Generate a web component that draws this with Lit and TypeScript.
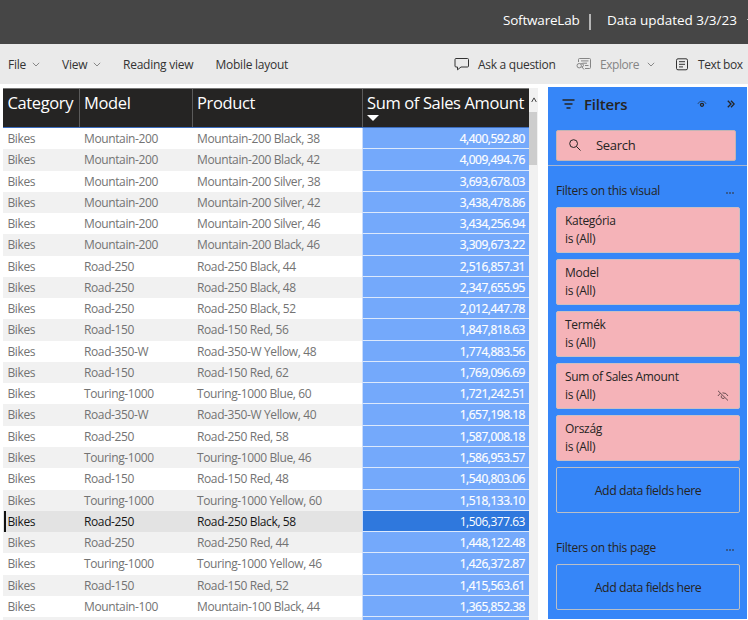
import { LitElement, html, css, svg } from "lit";
import { customElement, property } from "lit/decorators.js";
import { classMap } from "lit/directives/class-map.js";

type Row = [model: string, product: string, amount: string];

const rows: Row[] = [
  ["Mountain-200", "Mountain-200 Black, 38", "4,400,592.80"],
  ["Mountain-200", "Mountain-200 Black, 42", "4,009,494.76"],
  ["Mountain-200", "Mountain-200 Silver, 38", "3,693,678.03"],
  ["Mountain-200", "Mountain-200 Silver, 42", "3,438,478.86"],
  ["Mountain-200", "Mountain-200 Silver, 46", "3,434,256.94"],
  ["Mountain-200", "Mountain-200 Black, 46", "3,309,673.22"],
  ["Road-250", "Road-250 Black, 44", "2,516,857.31"],
  ["Road-250", "Road-250 Black, 48", "2,347,655.95"],
  ["Road-250", "Road-250 Black, 52", "2,012,447.78"],
  ["Road-150", "Road-150 Red, 56", "1,847,818.63"],
  ["Road-350-W", "Road-350-W Yellow, 48", "1,774,883.56"],
  ["Road-150", "Road-150 Red, 62", "1,769,096.69"],
  ["Touring-1000", "Touring-1000 Blue, 60", "1,721,242.51"],
  ["Road-350-W", "Road-350-W Yellow, 40", "1,657,198.18"],
  ["Road-250", "Road-250 Red, 58", "1,587,008.18"],
  ["Touring-1000", "Touring-1000 Blue, 46", "1,586,953.57"],
  ["Road-150", "Road-150 Red, 48", "1,540,803.06"],
  ["Touring-1000", "Touring-1000 Yellow, 60", "1,518,133.10"],
  ["Road-250", "Road-250 Black, 58", "1,506,377.63"],
  ["Road-250", "Road-250 Red, 44", "1,448,122.48"],
  ["Touring-1000", "Touring-1000 Yellow, 46", "1,426,372.87"],
  ["Road-150", "Road-150 Red, 52", "1,415,563.61"],
  ["Mountain-100", "Mountain-100 Black, 44", "1,365,852.38"],
  ["", "", ""],
];
const selectedIndex = 18;

const glyphs: Record<string, { w: number; h: number; body: unknown }> = {
  chevron: { w: 8, h: 5, body: svg`<path d="M.8.8 4 4 7.2.8" />` },
  comment: { w: 16, h: 14, body: svg`<path d="M2 1.500h11.500q1 0 1 1v6.500q0 1-1 1H7L3.500 12.800V10H2q-1 0-1-1v-6.500q0-1 1-1Z" />` },
  explore: { w: 16, h: 14, body: svg`<path d="M2.500 5V2.500q0-1 1-1h10q1 0 1 1v8q0 1-1 1H9M5 3.900h7.500M6.500 6.200H11M9 8.500h3.500" /><circle cx="3.200" cy="8.700" r="2.200" /><path d="M4.500 6.700q3-.7 3 1.600 0 1.700-2 1.700M6 10l2 2.500" />` },
  textbox: { w: 14, h: 13, body: svg`<rect x="1.500" y=".8" width="11" height="11" rx="1.500" /><path d="M4 3.700h6M4 6.300h6M4 8.900h4" />` },
  funnel: { w: 13, h: 10, body: svg`<path d="M.5 1h12M2.500 5h8M4.500 9h4" stroke-width="1.300" />` },
  eye: { w: 10, h: 8, body: svg`<path d="M.8 4Q2 1.200 5 1.200T9.200 4" opacity=".6"/><circle cx="5" cy="4.800" r="1.500" stroke-width="1.300"/>` },
  collapse: { w: 8, h: 8, body: svg`<path d="M.8.700 4 4 .8 7.300M4 .700 7.200 4 4 7.300" stroke-width="1.300" />` },
  search: { w: 12, h: 12, body: svg`<circle cx="4.600" cy="4.600" r="3.900" /><path d="m7.500 7.500 4 4" />` },
  hidden: { w: 12, h: 11, body: svg`<path d="M1 .8l10 9.700M1 6q.8-1.800 2.500-2.500M5.500 2.800Q9.500 2.600 11 6" /><path d="M4.300 5.500q-.8 2.700 1.700 3 1.200 0 1.700-.8" />` },
  sort: { w: 12, h: 6, body: svg`<path d="M0 0h12L6 6Z" fill="currentColor" stroke="none" />` },
  up: { w: 6, h: 6, body: svg`<path d="M.7 5 3 .9 5.300 5" />` },
  more: { w: 8, h: 2, body: svg`<path d="M0 1h2M3 1h2M6 1h2" stroke-width="1.500" />` },
};

@customElement("ui-glyph")
class UiGlyph extends LitElement {
  @property() name = "chevron";
  static styles = css`
    :host { display: inline-flex; flex: none; }
    svg { display: block; fill: none; stroke: currentColor; stroke-width: 1; }
  `;
  render() {
    const g = glyphs[this.name];
    return html`<svg width=${g.w} height=${g.h} viewBox="0 0 ${g.w} ${g.h}">${g.body}</svg>`;
  }
}

@customElement("sales-table")
class SalesTable extends LitElement {
  static styles = css`
    :host { display: flex; height: 532px; width: 535px; overflow: hidden; }
    .table { width: 526px; flex: none; }
    .line { display: grid; grid-template-columns: 76.500px 113px 170px 166.500px; }
    .head { height: 40px; box-sizing: border-box; background: #252423; color: #fff; border-top: 1px solid #777; border-bottom: 1px solid #3c6dbe; font-size: 16.500px; letter-spacing: -.37px; }
    .head div { padding: 3px 0 0 4.500px; line-height: 22px; border-right: 1px solid #5b5b5b; white-space: nowrap; }
    .head div:last-child { border: 0; }
    .head ui-glyph { display: flex; margin-top: 1px; }
    .row { height: 21.270px; color: #737373; font-size: 12px; letter-spacing: -.38px; line-height: 18.270px; }
    .row div { padding: 2px 0 0 4.500px; white-space: nowrap; }
    .row.odd { background: #f1f1f1; }
    .row .amount { background: #74a9fb; color: #fff; text-align: right; padding-right: 4px; margin-left: -.5px; border-bottom: 1px solid #dce9fc; border-left: 1px solid #c9dcfb; -webkit-text-stroke: .2px #fff; letter-spacing: -.48px; }
    .row.selected { background: #e3e3e3; color: #171717; }
    .row.selected .amount { background: #2f78dd; color: #fff; -webkit-text-stroke: 0; }
    .row.selected div:first-child { border-left: 2px solid #111; margin-left: 1px; padding-left: 1.500px; }
    .scroll { width: 9px; background: #f1f1f1; }
    .up { height: 24px; display: grid; place-items: center; color: #444; }
    .thumb { height: 53px; background: #cdcdcd; margin-right: 1px; }
  `;
  render() {
    return html`
      <div class="table">
        <div class="line head">
          <div>Category</div><div>Model</div><div>Product</div>
          <div>Sum of Sales Amount<ui-glyph name="sort"></ui-glyph></div>
        </div>
        ${rows.map(([model, product, amount], i) => html`
          <div class=${classMap({ line: true, row: true, odd: i % 2 === 1, selected: i === selectedIndex })}>
            <div>${model ? "Bikes" : ""}</div><div>${model}</div><div>${product}</div><div class="amount">${amount}</div>
          </div>`)}
      </div>
      <div class="scroll"><div class="up"><ui-glyph name="up"></ui-glyph></div><div class="thumb"></div></div>
    `;
  }
}

@customElement("filter-pane")
class FilterPane extends LitElement {
  static styles = css`
    :host { display: block; width: 199px; height: 532px; background: #3686f8; color: #252423; font-size: 12px; letter-spacing: -.3px; overflow: hidden; box-sizing: border-box; }
    .title { display: flex; align-items: center; height: 34px; padding: 0 12px 0 14px; font-size: 15px; font-weight: 600; letter-spacing: -.2px; }
    .title span { margin-left: 9px; flex: 1; }
    .title ui-glyph + ui-glyph { margin-left: 20px; }
    .search { display: flex; align-items: center; gap: 15px; box-sizing: border-box; width: 180px; height: 31px; margin: 9px 0 0 8px; padding: 0 0 2px 12px; background: #f5b3b8; border: 1px solid #c3b5b5; border-radius: 2px; font-size: 13px; }
    .rule { height: 1px; background: #a7b6cf; margin-top: 4px; }
    .label { display: flex; align-items: center; justify-content: space-between; height: 20px; padding: 0 13px 0 8px; margin-top: 14px; margin-bottom: 7px; letter-spacing: -.27px; }
    .label ui-glyph { margin-top: 6px; color: #344c72; }
    .page { margin-top: 24px; }
    .card { box-sizing: border-box; width: 184px; height: 46px; margin: 0 0 6px 8px; border: 1px solid #ccbfc2; border-radius: 2px; }
    .field { display: flex; justify-content: space-between; align-items: flex-end; background: #f5b3b8; line-height: 18px; padding: 0 10px 4px 8px; }
    .field ui-glyph { margin-bottom: 3px; color: #6a4e52; }
    .drop { display: grid; place-items: center; border-color: #b9bfc9; font-size: 12.300px; letter-spacing: -.42px; }
  `;
  render() {
    const fields = ["Kategória", "Model", "Termék", "Sum of Sales Amount", "Ország"];
    return html`
      <div class="title"><ui-glyph name="funnel"></ui-glyph><span>Filters</span><ui-glyph name="eye"></ui-glyph><ui-glyph name="collapse"></ui-glyph></div>
      <div class="search"><ui-glyph name="search"></ui-glyph>Search</div>
      <div class="rule"></div>
      <div class="label">Filters on this visual<ui-glyph name="more"></ui-glyph></div>
      ${fields.map((f) => html`<div class="card field"><div>${f}<br />is (All)</div>${f.startsWith("Sum") ? html`<ui-glyph name="hidden"></ui-glyph>` : ""}</div>`)}
      <div class="card drop">Add data fields here</div>
      <div class="label page">Filters on this page<ui-glyph name="more"></ui-glyph></div>
      <div class="card drop">Add data fields here</div>
    `;
  }
}

@customElement("app-root")
class AppRoot extends LitElement {
  static styles = css`
    :host { display: block; width: 748px; height: 620px; overflow: hidden; background: #fff; font-family: "Open Sans", "Noto Sans", sans-serif; }
    .top { display: flex; height: 44px; box-sizing: border-box; padding: 10px 0 0 503px; background: #464646; color: #fff; font-size: 13.500px; letter-spacing: -.2px; line-height: 20px; white-space: nowrap; }
    .updated { letter-spacing: -.03px; }
    .bar { width: 2px; height: 16px; background: #b5b5b5; margin: 4px 16.500px 0 9px; }
    .edge { width: 1px; height: 1px; margin: 9px 0 0 auto; background: #bbb; }
    .menu { display: flex; align-items: center; height: 40px; background: #eaeaea; color: #333; font-size: 12px; letter-spacing: -.25px; padding: 0 6px 0 8px; white-space: nowrap; }
    .item { display: flex; align-items: center; }
    .file { width: 54px; gap: 6px; }
    .view { width: 61px; gap: 6px; }
    .read { width: 92.500px; }
    .ask { width: 122px; margin-left: auto; gap: 8px; box-sizing: border-box; letter-spacing: -.28px; }
    .explore { width: 99px; gap: 8px; color: #858585; letter-spacing: -.45px; }
    .text { width: 67px; gap: 9px; letter-spacing: -.4px; }
    .chev { color: #888; }
    .main { display: flex; justify-content: space-between; padding: 3px 1px 0 3px; }
    sales-table { margin-top: 1px; }
  `;
  render() {
    const chev = html`<ui-glyph class="chev" name="chevron"></ui-glyph>`;
    return html`
      <div class="top"><span>SoftwareLab</span><div class="bar"></div><span class="updated">Data updated 3/3/23</span><div class="edge"></div></div>
      <div class="menu">
        <div class="item file">File${chev}</div>
        <div class="item view">View${chev}</div>
        <div class="item read">Reading view</div>
        <div class="item">Mobile layout</div>
        <div class="item ask"><ui-glyph name="comment"></ui-glyph>Ask a question</div>
        <div class="item explore"><ui-glyph name="explore"></ui-glyph>Explore${chev}</div>
        <div class="item text"><ui-glyph name="textbox"></ui-glyph>Text box</div>
      </div>
      <div class="main"><sales-table></sales-table><filter-pane></filter-pane></div>
    `;
  }
}
